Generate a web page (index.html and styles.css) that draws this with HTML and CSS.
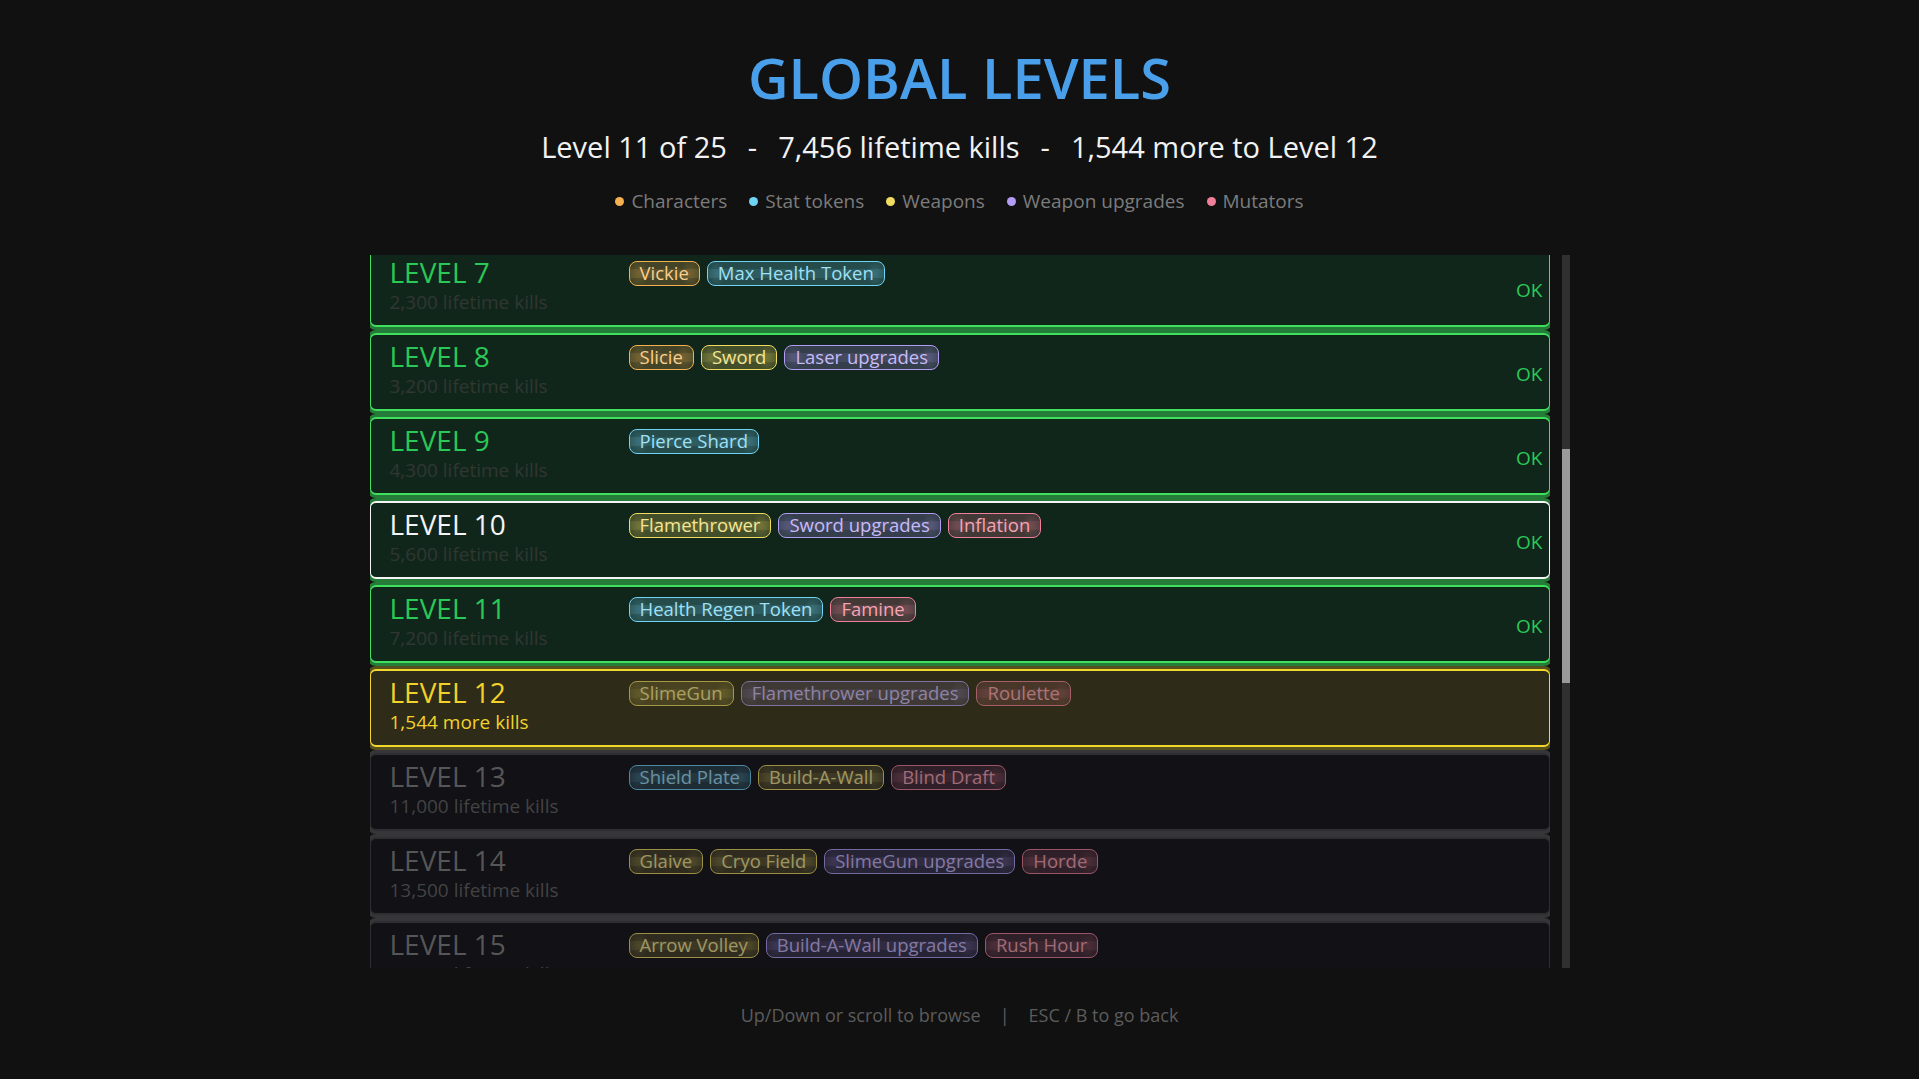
FILE: index.html
```html
<!DOCTYPE html>
<html>
<head>
    <title>Global Levels</title>
    <link rel="stylesheet" href="styles.css">
</head>
<body>
    <h1 class="title">GLOBAL LEVELS</h1>
    <p class="summary">Level 11 of 25<span class="sep">-</span>7,456 lifetime kills<span class="sep">-</span>1,544 more to Level 12</p>

    <ul class="legend">
        <li><span class="dot dot-char"></span>Characters</li>
        <li><span class="dot dot-stat"></span>Stat tokens</li>
        <li><span class="dot dot-weapon"></span>Weapons</li>
        <li><span class="dot dot-upgrade"></span>Weapon upgrades</li>
        <li><span class="dot dot-mutator"></span>Mutators</li>
    </ul>

    <div class="browser">
        <div class="viewport">
            <div class="levels">
                <div class="level is-done">
                    <div class="level-info">
                        <div class="level-name">LEVEL 7</div>
                        <div class="level-kills">2,300 lifetime kills</div>
                    </div>
                    <div class="rewards">
                        <span class="tag tag-char">Vickie</span>
                        <span class="tag tag-stat">Max Health Token</span>
                    </div>
                    <div class="level-status">OK</div>
                </div>

                <div class="level is-done">
                    <div class="level-info">
                        <div class="level-name">LEVEL 8</div>
                        <div class="level-kills">3,200 lifetime kills</div>
                    </div>
                    <div class="rewards">
                        <span class="tag tag-char">Slicie</span>
                        <span class="tag tag-weapon">Sword</span>
                        <span class="tag tag-upgrade">Laser upgrades</span>
                    </div>
                    <div class="level-status">OK</div>
                </div>

                <div class="level is-done">
                    <div class="level-info">
                        <div class="level-name">LEVEL 9</div>
                        <div class="level-kills">4,300 lifetime kills</div>
                    </div>
                    <div class="rewards">
                        <span class="tag tag-stat">Pierce Shard</span>
                    </div>
                    <div class="level-status">OK</div>
                </div>

                <div class="level is-done is-current">
                    <div class="level-info">
                        <div class="level-name">LEVEL 10</div>
                        <div class="level-kills">5,600 lifetime kills</div>
                    </div>
                    <div class="rewards">
                        <span class="tag tag-weapon">Flamethrower</span>
                        <span class="tag tag-upgrade">Sword upgrades</span>
                        <span class="tag tag-mutator">Inflation</span>
                    </div>
                    <div class="level-status">OK</div>
                </div>

                <div class="level is-done">
                    <div class="level-info">
                        <div class="level-name">LEVEL 11</div>
                        <div class="level-kills">7,200 lifetime kills</div>
                    </div>
                    <div class="rewards">
                        <span class="tag tag-stat">Health Regen Token</span>
                        <span class="tag tag-mutator">Famine</span>
                    </div>
                    <div class="level-status">OK</div>
                </div>

                <div class="level is-next">
                    <div class="level-info">
                        <div class="level-name">LEVEL 12</div>
                        <div class="level-kills">1,544 more kills</div>
                    </div>
                    <div class="rewards">
                        <span class="tag tag-weapon">SlimeGun</span>
                        <span class="tag tag-upgrade">Flamethrower upgrades</span>
                        <span class="tag tag-mutator">Roulette</span>
                    </div>
                </div>

                <div class="level is-locked">
                    <div class="level-info">
                        <div class="level-name">LEVEL 13</div>
                        <div class="level-kills">11,000 lifetime kills</div>
                    </div>
                    <div class="rewards">
                        <span class="tag tag-stat">Shield Plate</span>
                        <span class="tag tag-weapon">Build-A-Wall</span>
                        <span class="tag tag-mutator">Blind Draft</span>
                    </div>
                </div>

                <div class="level is-locked">
                    <div class="level-info">
                        <div class="level-name">LEVEL 14</div>
                        <div class="level-kills">13,500 lifetime kills</div>
                    </div>
                    <div class="rewards">
                        <span class="tag tag-weapon">Glaive</span>
                        <span class="tag tag-weapon">Cryo Field</span>
                        <span class="tag tag-upgrade">SlimeGun upgrades</span>
                        <span class="tag tag-mutator">Horde</span>
                    </div>
                </div>

                <div class="level is-locked">
                    <div class="level-info">
                        <div class="level-name">LEVEL 15</div>
                        <div class="level-kills">16,500 lifetime kills</div>
                    </div>
                    <div class="rewards">
                        <span class="tag tag-weapon">Arrow Volley</span>
                        <span class="tag tag-upgrade">Build-A-Wall upgrades</span>
                        <span class="tag tag-mutator">Rush Hour</span>
                    </div>
                </div>
            </div>
        </div>

        <div class="scrollbar">
            <div class="scrollbar-thumb"></div>
        </div>
    </div>

    <p class="hint">Up/Down or scroll to browse<span class="sep">|</span>ESC / B to go back</p>
</body>
</html>
```

FILE: styles.css
```css
body {
    margin: 0;
    height: 100vh;
    overflow: hidden;
    background: #111111;
    font-family: "Open Sans", "Noto Sans", sans-serif;
    color: #f0f0f0;
    text-align: center;
}

.title {
    margin: 0;
    padding-top: 45px;
    font-size: 56px;
    line-height: 64px;
    font-weight: 600;
    color: #4a9fea;
}

.summary {
    margin: 21px 0 0;
    font-size: 29px;
    line-height: 34px;
    color: #f2f2f2;
}

.summary .sep {
    margin: 0 21px;
}

.legend {
    display: flex;
    justify-content: center;
    gap: 22px;
    margin: 25px 0 0;
    padding: 0;
    list-style: none;
    font-size: 19px;
    line-height: 24px;
    color: #7c7c7c;
}

.legend li {
    display: flex;
    align-items: center;
    gap: 7px;
}

.dot {
    width: 9px;
    height: 9px;
    border-radius: 50%;
}

.dot-char { background: #f5b050; }
.dot-stat { background: #6fd3f5; }
.dot-weapon { background: #f0dc60; }
.dot-upgrade { background: #b39cf5; }
.dot-mutator { background: #f0809a; }

/* level list with its own scrollbar */
.browser {
    display: flex;
    gap: 12px;
    width: 1200px;
    margin: 42px auto 0;
    padding-left: 20px;
}

.viewport {
    width: 1180px;
    height: 713px;
    overflow: hidden;
}

.levels {
    display: flex;
    flex-direction: column;
    gap: 6px;
    margin-top: -6px;
    text-align: left;
}

.level {
    display: flex;
    align-items: flex-start;
    box-sizing: border-box;
    height: 78px;
    padding: 4px 6px 0 19px;
    border-style: solid;
    border-width: 2px 1px;
    border-radius: 6px;
}

.level-info {
    flex: none;
    width: 239px;
}

.level-name {
    font-size: 28px;
    line-height: 34px;
}

.level-kills {
    margin-top: 2px;
    font-size: 19px;
    line-height: 22px;
}

.rewards {
    flex: 1;
    display: flex;
    flex-wrap: wrap;
    gap: 7px;
    margin-top: 6px;
}

.level-status {
    align-self: center;
    font-size: 19px;
    color: #2ac857;
}

/* the glow band between rows comes from a spread shadow */
.is-done {
    background: #11261b;
    border-color: #3fe05e;
    box-shadow: 0 0 0 3px #257c38;
}

.is-done .level-name { color: #2ac857; }
.is-done .level-kills { color: #303732; }

.is-current {
    border-color: #f4f4f4;
}

.is-current .level-name { color: #f4f4f4; }

.is-next {
    background: #2e2b18;
    border-color: #f2d82c;
    box-shadow: 0 0 0 3px #57511f;
}

.is-next .level-name,
.is-next .level-kills { color: #f2d22a; }

.is-locked {
    background: #111116;
    border-color: #2e2e32;
    box-shadow: 0 0 0 3px #363638;
}

.is-locked .level-name { color: #565656; }
.is-locked .level-kills { color: #434343; }

/* reward pills, colour comes from --c */
.tag {
    display: inline-block;
    padding: 0 10px 1px;
    font-size: 18.5px;
    line-height: 22px;
    border: 1px solid rgb(var(--c));
    border-radius: 8px;
    color: rgb(var(--t));
    background-color: rgba(var(--c), 0.22);
    background-image:
        radial-gradient(ellipse 9px 13px at 9px 50%, rgba(var(--c), 0.18), transparent),
        radial-gradient(ellipse 9px 13px at calc(100% - 9px) 50%, rgba(var(--c), 0.18), transparent),
        linear-gradient(to bottom, transparent 32%, rgba(var(--c), 0.12) 32%, rgba(var(--c), 0.12) 68%, transparent 68%);
}

.tag-char { --c: 245, 176, 80; --t: 250, 206, 140; }
.tag-stat { --c: 111, 211, 245; --t: 160, 224, 245; }
.tag-weapon { --c: 240, 220, 96; --t: 245, 230, 150; }
.tag-upgrade { --c: 179, 156, 245; --t: 200, 186, 248; }
.tag-mutator { --c: 240, 128, 154; --t: 245, 164, 180; }

.is-next .tag,
.is-locked .tag {
    opacity: 0.62;
}

.scrollbar {
    flex: none;
    width: 8px;
    height: 713px;
    background: #303030;
}

.scrollbar-thumb {
    height: 234px;
    margin-top: 194px;
    background: #9a9a9a;
}

.hint {
    margin: 35px 0 0;
    font-size: 18px;
    line-height: 24px;
    color: #5c5c5c;
}

.hint .sep {
    margin: 0 19px;
}
```
